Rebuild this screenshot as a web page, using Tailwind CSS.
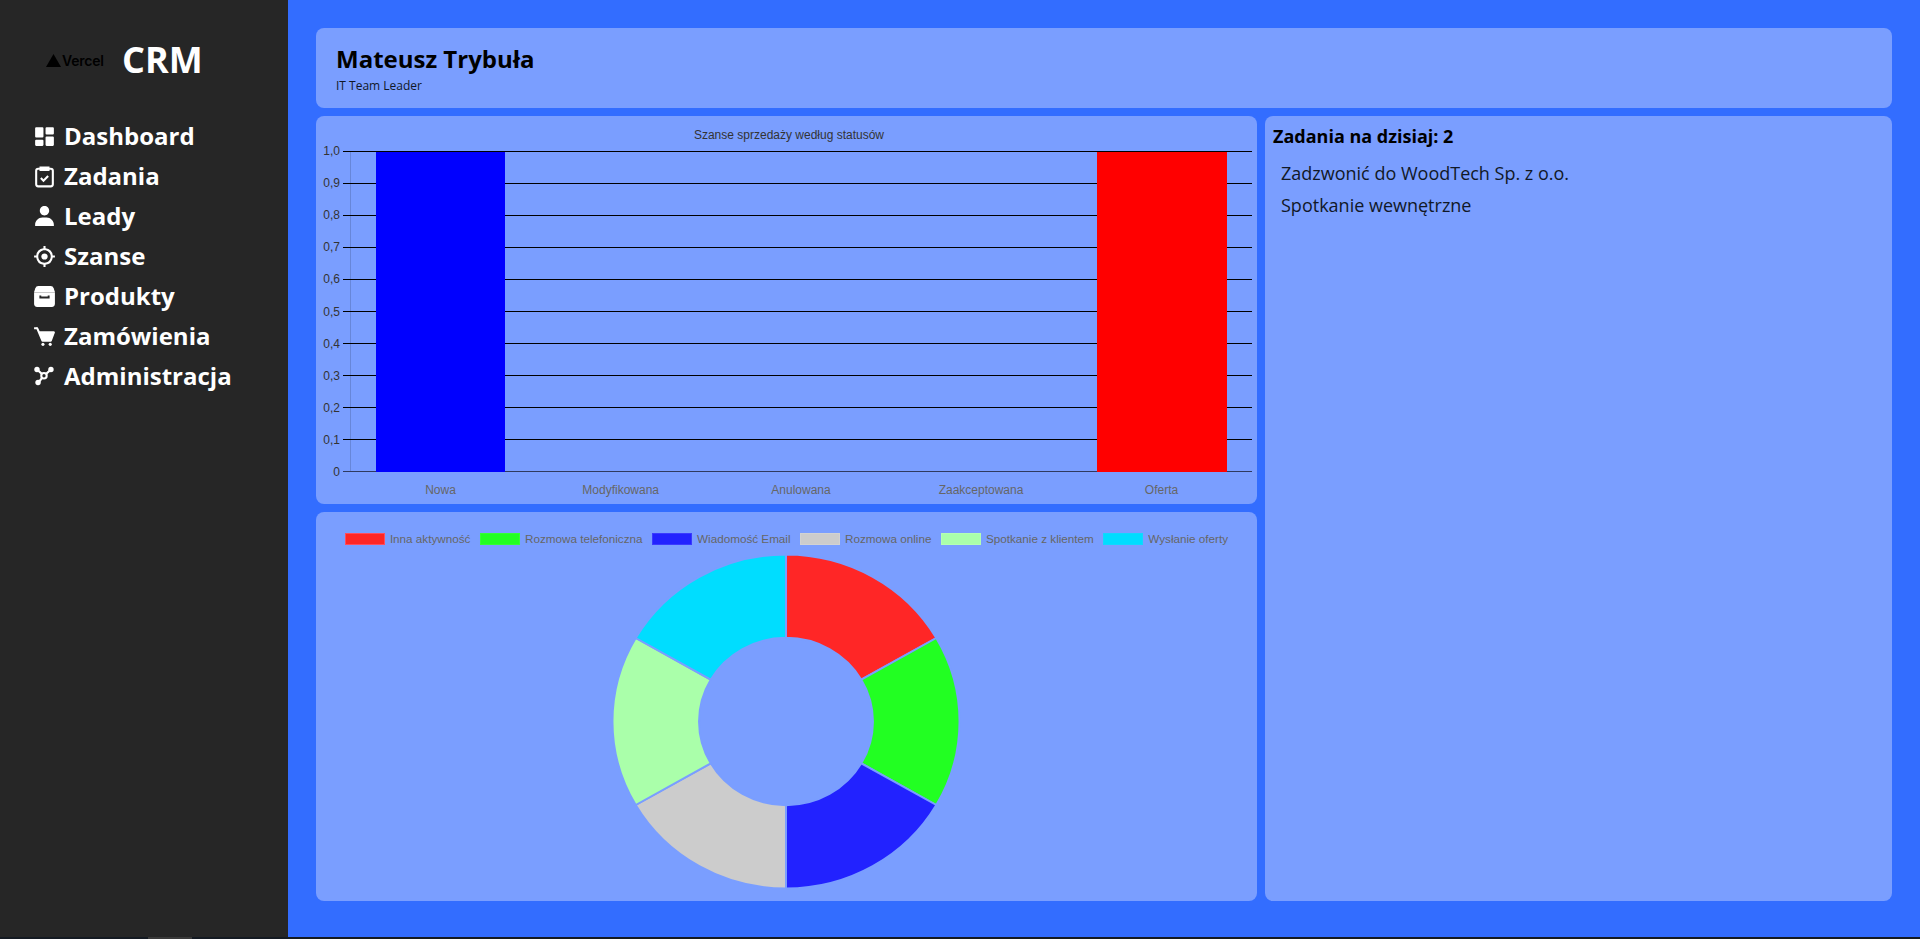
<!DOCTYPE html>
<html lang="pl">
<head>
<meta charset="UTF-8" />
<title>CRM</title>
<script src="https://cdn.jsdelivr.net/npm/@tailwindcss/browser@4"></script>
</head>
<body class="bg-[#141a22] font-['Open_Sans',sans-serif] overflow-hidden">
<div class="flex h-[937px]">
  <!-- Sidebar -->
  <aside class="w-[288px] shrink-0 bg-[#262626] text-white">
    <div class="flex items-center h-[48px] mt-[36px] pl-[46px]">
      <div class="flex items-center w-[76px] text-black font-['Inter',sans-serif] font-semibold text-[14px] tracking-[-0.2px]">
        <svg class="w-[15px] h-[13px] mr-px" viewBox="0 0 15 13"><path d="M7.500 0L15 13H0z" fill="#000"/></svg>
        <span>Vercel</span>
      </div>
      <span class="text-[36px] font-bold leading-none">CRM</span>
    </div>
    <nav class="mt-[32px] pl-[32px] flex flex-col text-[24px] font-bold">
      <a href="#" class="flex items-center h-[40px] gap-[7px]">
        <svg class="w-[25px] h-[25px]" viewBox="0 0 24 24" fill="currentColor"><path d="M4 13h6a1 1 0 0 0 1-1V4a1 1 0 0 0-1-1H4a1 1 0 0 0-1 1v8a1 1 0 0 0 1 1zm-1 7a1 1 0 0 0 1 1h6a1 1 0 0 0 1-1v-4a1 1 0 0 0-1-1H4a1 1 0 0 0-1 1v4zm10 0a1 1 0 0 0 1 1h6a1 1 0 0 0 1-1v-7a1 1 0 0 0-1-1h-6a1 1 0 0 0-1 1v7zm1-10h6a1 1 0 0 0 1-1V4a1 1 0 0 0-1-1h-6a1 1 0 0 0-1 1v5a1 1 0 0 0 1 1z"/></svg>
        Dashboard
      </a>
      <a href="#" class="flex items-center h-[40px] gap-[7px]">
        <svg class="w-[25px] h-[25px]" viewBox="0 0 24 24" fill="none" stroke="currentColor" stroke-width="2"><rect x="4" y="4.500" width="16" height="17" rx="2"/><path d="M8 3.200h8v2.600H8z" fill="currentColor" stroke-width="1.600"/><path d="M8.500 13.500l2.500 2.500 4.500-4.500"/></svg>
        Zadania
      </a>
      <a href="#" class="flex items-center h-[40px] gap-[7px]">
        <svg class="w-[25px] h-[25px]" viewBox="0 0 24 24" fill="currentColor"><path d="M7.500 6.500C7.500 8.981 9.519 11 12 11s4.500-2.019 4.500-4.500S14.481 2 12 2 7.500 4.019 7.500 6.500zM20 21h1v-1c0-3.859-3.141-7-7-7h-4c-3.860 0-7 3.141-7 7v1h17z"/></svg>
        Leady
      </a>
      <a href="#" class="flex items-center h-[40px] gap-[7px]">
        <svg class="w-[25px] h-[25px]" viewBox="0 0 24 24" fill="currentColor"><circle cx="12" cy="12" r="3"/><path d="M13 4.069V2h-2v2.069A8.010 8.010 0 0 0 4.069 11H2v2h2.069A8.008 8.008 0 0 0 11 19.931V22h2v-2.069A8.007 8.007 0 0 0 19.931 13H22v-2h-2.069A8.008 8.008 0 0 0 13 4.069zM12 18c-3.309 0-6-2.691-6-6s2.691-6 6-6 6 2.691 6 6-2.691 6-6 6z"/></svg>
        Szanse
      </a>
      <a href="#" class="flex items-center h-[40px] gap-[7px]">
        <svg class="w-[25px] h-[25px]" viewBox="0 0 24 24" fill="currentColor"><path d="M6 2h12a3 3 0 0 1 2.800 2L22 7.600H2L3.200 4A3 3 0 0 1 6 2z"/><path d="M2 8h20v11a3 3 0 0 1-3 3H5a3 3 0 0 1-3-3z"/><path d="M8 11v2h8v-2" fill="none" stroke="#262626" stroke-width="1.800"/></svg>
        Produkty
      </a>
      <a href="#" class="flex items-center h-[40px] gap-[7px]">
        <svg class="w-[25px] h-[25px]" viewBox="0 0 24 24" fill="currentColor"><path d="M21.822 7.431A1 1 0 0 0 21 7H7.333L6.179 4.230A1.994 1.994 0 0 0 4.333 3H2v2h2.333l4.744 11.385A1 1 0 0 0 10 17h8c.417 0 .790-.259.937-.648l3-8a1 1 0 0 0-.115-.921z"/><circle cx="10.500" cy="19.500" r="1.500"/><circle cx="17.500" cy="19.500" r="1.500"/></svg>
        Zamówienia
      </a>
      <a href="#" class="flex items-center h-[40px] gap-[7px]">
        <svg class="w-[25px] h-[25px]" viewBox="0 0 24 24" fill="none" stroke="currentColor" stroke-width="2"><circle cx="11.500" cy="11.300" r="2.600"/><path d="M5 5.500l4.500 4M18 5.500l-4.500 4M6 18l3.800-4.800"/><circle cx="4.800" cy="5.300" r="2.600" fill="currentColor" stroke="none"/><circle cx="18.200" cy="5.300" r="2.600" fill="currentColor" stroke="none"/><circle cx="5.800" cy="17.800" r="2.600" fill="currentColor" stroke="none"/></svg>
        Administracja
      </a>
    </nav>
  </aside>

  <!-- Main -->
  <main class="flex-1 bg-[#336dff] pt-[28px] pl-[28px] pr-[28px] flex flex-col gap-[8px]">
    <header class="h-[80px] bg-[#7a9eff] rounded-lg pl-[20px] pt-[15px] text-black">
      <h1 class="text-[24px] font-bold leading-[32px]">Mateusz Trybuła</h1>
      <p class="text-[12px] leading-[16px] mt-[3px] text-[#111827]">IT Team Leader</p>
    </header>

    <div class="grid grid-cols-[941px_627px] grid-rows-[388px_389px] gap-[8px]">
      <!-- Bar chart -->
      <section class="bg-[#7a9eff] rounded-lg">
        <svg class="block font-['Liberation_Sans',sans-serif] text-[12px]" width="941" height="388" viewBox="0 0 941 388">
          <text x="473" y="23" text-anchor="middle" class="fill-[#333]">Szanse sprzedaży według statusów</text>
          <path d="M34.500 36v320" stroke="#000" stroke-opacity=".15"/>
          <g stroke="#000">
            <path d="M27 35.500H936M27 67.500H936M27 99.500H936M27 131.500H936M27 163.500H936M27 195.500H936M27 227.500H936M27 259.500H936M27 291.500H936M27 323.500H936" />
            <path d="M27 355.500H936" stroke="#2f3a60"/>
          </g>
          <rect x="60" y="36" width="129" height="320" fill="#0000ff"/>
          <rect x="781" y="36" width="130" height="320" fill="#ff0000"/>
          <g text-anchor="end" class="fill-[#333]">
            <text x="24" y="39">1,0</text><text x="24" y="71">0,9</text><text x="24" y="103">0,8</text>
            <text x="24" y="135">0,7</text><text x="24" y="167">0,6</text><text x="24" y="199.500">0,5</text>
            <text x="24" y="231.500">0,4</text><text x="24" y="263.500">0,3</text><text x="24" y="295.500">0,2</text>
            <text x="24" y="327.500">0,1</text><text x="24" y="360">0</text>
          </g>
          <g text-anchor="middle" class="fill-[#666]">
            <text x="124.500" y="377.500">Nowa</text><text x="304.700" y="377.500">Modyfikowana</text>
            <text x="485" y="377.500">Anulowana</text><text x="665" y="377.500">Zaakceptowana</text>
            <text x="845.500" y="377.500">Oferta</text>
          </g>
        </svg>
      </section>

      <!-- Tasks -->
      <section class="row-span-2 bg-[#7a9eff] rounded-lg pl-[8px] pt-[6px] text-[#111827]">
        <h2 class="text-[18px] font-bold leading-[28px] text-black">Zadania na dzisiaj: 2</h2>
        <ul class="pl-[8px] mt-[7px] text-[18px] leading-[32px]">
          <li>Zadzwonić do WoodTech Sp. z o.o.</li>
          <li>Spotkanie wewnętrzne</li>
        </ul>
      </section>

      <!-- Donut chart -->
      <section class="bg-[#7a9eff] rounded-lg flex flex-col items-center">
        <div class="flex items-center gap-[9.500px] mt-[21px] h-[12px] text-[11.700px] text-[#666] font-['Liberation_Sans',sans-serif]">
          <div class="flex items-center gap-[5px]"><i class="block w-[40px] h-[12px] bg-[#ff2626] border border-[#ff4d5e]"></i>Inna aktywność</div>
          <div class="flex items-center gap-[5px]"><i class="block w-[40px] h-[12px] bg-[#22ff22] border border-[#33ff33]"></i>Rozmowa telefoniczna</div>
          <div class="flex items-center gap-[5px]"><i class="block w-[40px] h-[12px] bg-[#2222ff] border border-[#3a3aff]"></i>Wiadomość Email</div>
          <div class="flex items-center gap-[5px]"><i class="block w-[40px] h-[12px] bg-[#cccccc] border border-[#d2d2d2]"></i>Rozmowa online</div>
          <div class="flex items-center gap-[5px]"><i class="block w-[40px] h-[12px] bg-[#aaffaa] border border-[#b4ffb4]"></i>Spotkanie z klientem</div>
          <div class="flex items-center gap-[5px]"><i class="block w-[40px] h-[12px] bg-[#00ddff] border border-[#10d8ff]"></i>Wysłanie oferty</div>
        </div>
        <svg class="block mt-[8px] mr-[2px]" width="350" height="337" viewBox="-175 -175 350 350" preserveAspectRatio="none" stroke="#7a9eff" stroke-width="2">
          <path fill="#ff2626" d="M0 -173.500A173.500 173.500 0 0 1 150.300 -86.750L75.300 -43.500A87 87 0 0 0 0 -87z"/>
          <path fill="#22ff22" d="M150.300 -86.750A173.500 173.500 0 0 1 150.300 86.750L75.300 43.500A87 87 0 0 0 75.300 -43.500z"/>
          <path fill="#2222ff" d="M150.300 86.750A173.500 173.500 0 0 1 0 173.500L0 87A87 87 0 0 0 75.300 43.500z"/>
          <path fill="#cccccc" d="M0 173.500A173.500 173.500 0 0 1 -150.300 86.750L-75.300 43.500A87 87 0 0 0 0 87z"/>
          <path fill="#aaffaa" d="M-150.300 86.750A173.500 173.500 0 0 1 -150.300 -86.750L-75.300 -43.500A87 87 0 0 0 -75.300 43.500z"/>
          <path fill="#00ddff" d="M-150.300 -86.750A173.500 173.500 0 0 1 0 -173.500L0 -87A87 87 0 0 0 -75.300 -43.500z"/>
        </svg>
      </section>
    </div>
  </main>
</div>
<div class="h-[2px] pl-[148px]"><div class="w-[44px] h-[2px] bg-[#3a3a3a]"></div></div>
</body>
</html>
